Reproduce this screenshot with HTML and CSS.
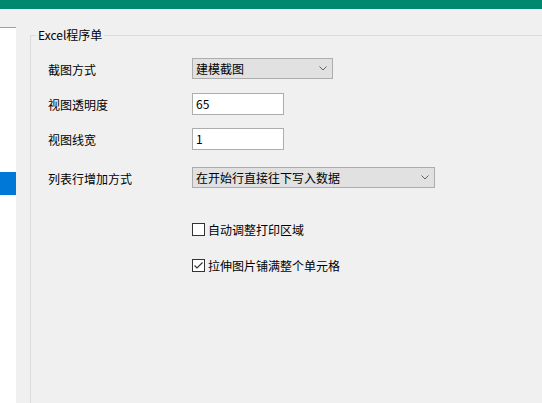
FILE: index.html
```html
<!DOCTYPE html>
<html lang="zh-CN">
<head>
  <meta charset="UTF-8">
  <title>Excel程序单</title>
  <link rel="stylesheet" href="styles.css">
</head>
<body>
  <div class="topbar"></div>

  <div class="main">
    <!-- 左侧列表 -->
    <div class="sidebar">
      <div class="side-item selected"></div>
    </div>

    <!-- 设置分组 -->
    <fieldset class="group">
      <legend>Excel程序单</legend>
      <div class="form">
        <div class="row r1">
          <span class="label">截图方式</span>
          <div class="combo w-short">
            <span>建模截图</span>
            <svg class="arrow" width="8" height="5" viewBox="0 0 8 5"><polyline points="0.5,0.5 4,4 7.5,0.5" fill="none" stroke="#606060" stroke-width="1"/></svg>
          </div>
        </div>
        <div class="row r2">
          <span class="label">视图透明度</span>
          <input class="text" type="text" value="65">
        </div>
        <div class="row r3">
          <span class="label">视图线宽</span>
          <input class="text" type="text" value="1">
        </div>
        <div class="row r4">
          <span class="label">列表行增加方式</span>
          <div class="combo w-long">
            <span>在开始行直接往下写入数据</span>
            <svg class="arrow" width="8" height="5" viewBox="0 0 8 5"><polyline points="0.5,0.5 4,4 7.5,0.5" fill="none" stroke="#606060" stroke-width="1"/></svg>
          </div>
        </div>

        <label class="check c1">
          <span class="box"></span>
          <span>自动调整打印区域</span>
        </label>
        <label class="check c2">
          <span class="box">
            <svg width="11" height="11" viewBox="0 0 11 11"><polyline points="1.5,5.5 4,8 9.5,2.5" fill="none" stroke="#333" stroke-width="1.2"/></svg>
          </span>
          <span>拉伸图片铺满整个单元格</span>
        </label>
      </div>
    </fieldset>
  </div>
</body>
</html>
```

FILE: styles.css
```css
html, body {
  height: 100%;
}
body {
  margin: 0;
  background: #f0f0f0;
  font-family: "Noto Sans CJK SC", "Liberation Sans", sans-serif;
  font-size: 12px;
  color: #000;
  overflow: hidden;
  display: flex;
  flex-direction: column;
}
.topbar {
  height: 9px;
  background: #00876f;
  flex-shrink: 0;
}
.main {
  flex: 1;
  display: flex;
}
.sidebar {
  width: 16px;
  flex-shrink: 0;
  margin-top: 18px;
  border-top: 1px solid #a0a0a0;
  background: #fff;
}
.side-item.selected {
  margin-top: 144px;
  height: 23px;
  background: #0078d7;
}
.group {
  flex: 1;
  margin: 19px 0 0 14px;
  padding: 0;
  border: 1px solid #dcdcdc;
  border-right: none;
  border-bottom: none;
  min-width: 0;
}
.group legend {
  margin-left: 5px;
  padding: 0 2px;
  line-height: 14px;
  height: 14px;
}
.form {
  padding: 16px 0 0 17px;
  display: flex;
  flex-direction: column;
}
.row {
  display: flex;
  align-items: center;
  height: 21px;
}
.r2, .r3 {
  margin-top: 14px;
}
.r4 {
  margin-top: 18px;
}
.label {
  width: 144px;
  flex-shrink: 0;
  line-height: 14px;
  padding-top: 2px;
}
.combo {
  box-sizing: border-box;
  height: 21px;
  border: 1px solid #adadad;
  background: #e1e1e1;
  display: flex;
  align-items: center;
  justify-content: space-between;
  padding: 0 5px 0 3px;
  line-height: 14px;
}
.combo .arrow {
  display: block;
}
.w-short {
  width: 141px;
}
.w-long {
  width: 243px;
}
.text {
  box-sizing: border-box;
  width: 92px;
  height: 22px;
  margin: 0;
  border: 1px solid #adadad;
  background: #fff;
  padding: 0 3px;
  font: inherit;
  color: #000;
  outline: none;
}
.check {
  display: flex;
  align-items: center;
  margin-left: 144px;
  height: 13px;
  line-height: 14px;
}
.c1 {
  margin-top: 35px;
}
.c2 {
  margin-top: 23px;
}
.box {
  box-sizing: border-box;
  width: 13px;
  height: 13px;
  border: 1px solid #333;
  background: #fff;
  margin-right: 3px;
  display: flex;
  align-items: center;
  justify-content: center;
}
.box svg {
  display: block;
}
```
